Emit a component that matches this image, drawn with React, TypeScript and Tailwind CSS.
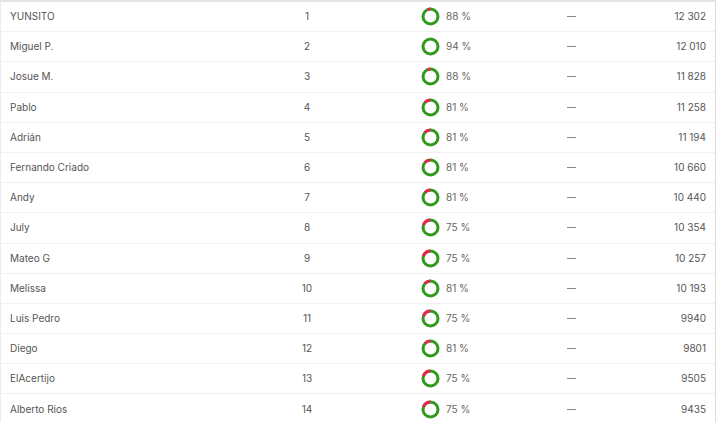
import React from "react";

const rows = [
  { name: "YUNSITO", rank: 1, pct: 88, value: "12 302" },
  { name: "Miguel P.", rank: 2, pct: 94, value: "12 010" },
  { name: "Josue M.", rank: 3, pct: 88, value: "11 828" },
  { name: "Pablo", rank: 4, pct: 81, value: "11 258" },
  { name: "Adrián", rank: 5, pct: 81, value: "11 194" },
  { name: "Fernando Criado", rank: 6, pct: 81, value: "10 660" },
  { name: "Andy", rank: 7, pct: 81, value: "10 440" },
  { name: "July", rank: 8, pct: 75, value: "10 354" },
  { name: "Mateo G", rank: 9, pct: 75, value: "10 257" },
  { name: "Melissa", rank: 10, pct: 81, value: "10 193" },
  { name: "Luis Pedro", rank: 11, pct: 75, value: "9940" },
  { name: "Diego", rank: 12, pct: 81, value: "9801" },
  { name: "ElAcertijo", rank: 13, pct: 75, value: "9505" },
  { name: "Alberto Rios", rank: 14, pct: 75, value: "9435" },
];

// angle in degrees, clockwise from 12 o'clock
function pt(a: number, r: number) {
  const rad = (a * Math.PI) / 180;
  return `${(9.5 + r * Math.sin(rad)).toFixed(2)} ${(9.5 - r * Math.cos(rad)).toFixed(2)}`;
}

function arc(a0: number, a1: number, r: number) {
  const large = a1 - a0 > 180 ? 1 : 0;
  return `M ${pt(a0, r)} A ${r} ${r} 0 ${large} 1 ${pt(a1, r)}`;
}

function Donut({ pct }: { pct: number }) {
  const r = 7.5;
  const end = Math.min(359.9, pct * 3.6 + 20);
  return (
    <svg width="19" height="19" viewBox="0 0 19 19" className="shrink-0">
      <circle cx="9.5" cy="9.5" r={r} fill="none" stroke="#2f9a1c" strokeWidth="3" />
      {end < 358 && (
        <path d={arc(end, 360, r)} fill="none" stroke="#e8264f" strokeWidth="3" />
      )}
    </svg>
  );
}

export default function App() {
  return (
    <div className="w-[720px] h-[422px] overflow-hidden bg-white font-['Inter',sans-serif] text-[10px] text-[#555]">
      <div className="w-[716px] border-t-2 border-t-[#e4e4e4] border-l border-l-[#ececec] border-r border-r-[#dcdcdc]">
        {rows.map((r) => (
          <div
            key={r.rank}
            className="grid grid-cols-[279px_36px_96px_84px_132px_1fr] items-center h-[30.2px] pl-[9px] pr-[9px] border-b border-[#f1f1f1]"
          >
            <div className="truncate">{r.name}</div>
            <div className="text-center">{r.rank}</div>
            <div />
            <div className="flex items-center gap-[6px]">
              <Donut pct={r.pct} />
              <span className="text-[#666]">{r.pct} %</span>
            </div>
            <div className="flex justify-center">
              <div className="w-[9px] h-[1px] bg-[#888]" />
            </div>
            <div className="text-right">{r.value}</div>
          </div>
        ))}
      </div>
    </div>
  );
}
